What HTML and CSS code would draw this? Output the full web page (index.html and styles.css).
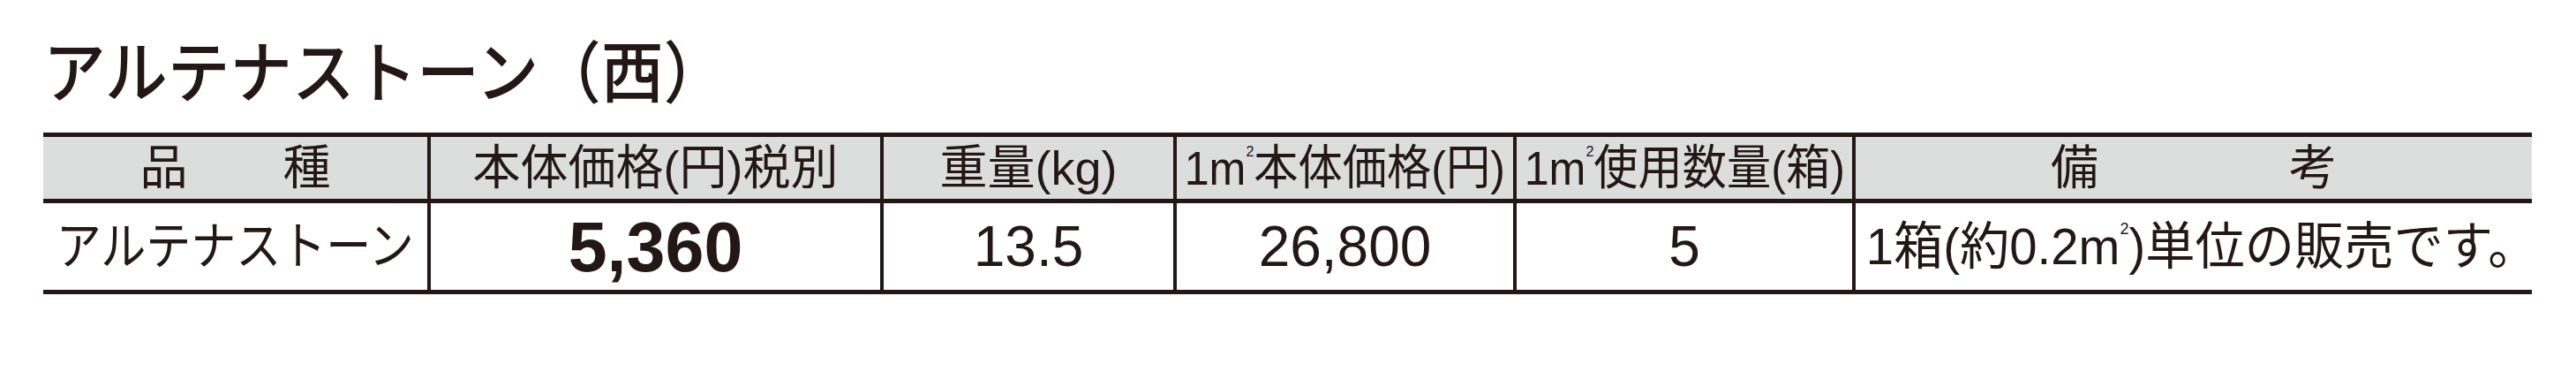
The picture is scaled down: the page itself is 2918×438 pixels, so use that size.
FILE: index.html
```html
<!DOCTYPE html>
<html lang="ja">
<head>
<meta charset="utf-8">
<title>アルテナストーン（西）</title>
<link rel="stylesheet" href="styles.css">
</head>
<body>
<div class="page">
  <h1 class="title"><span class="title-text">アルテナストーン（西）</span></h1>
  <div class="spec">
    <div class="cell head"><span class="ht">品　　種</span></div>
    <div class="cell head"><span class="ht">本体価格(円)税別</span></div>
    <div class="cell head"><span class="ht">重量(kg)</span></div>
    <div class="cell head"><span class="ht narrow">1m<span class="sq">2</span>本体価格(円)</span></div>
    <div class="cell head"><span class="ht narrow">1m<span class="sq">2</span>使用数量(箱)</span></div>
    <div class="cell head"><span class="ht">備　　　　考</span></div>
    <div class="cell"><span class="bt">アルテナストーン</span></div>
    <div class="cell"><span class="price">5,360</span></div>
    <div class="cell"><span class="num">13.5</span></div>
    <div class="cell"><span class="num">26,800</span></div>
    <div class="cell"><span class="num">5</span></div>
    <div class="cell"><span class="bt note">1箱(約0.2m<span class="sq">2</span>)単位の販売です。</span></div>
  </div>
</div>
</body>
</html>
```
FILE: styles.css
```css
html, body {
  margin: 0;
  background: #fff;
}
body {
  font-family: "Liberation Sans", "Noto Sans CJK JP", sans-serif;
  color: #231815;
}
.page {
  padding: 39px 0 0 49px;
}
.title {
  margin: 0;
  font: 500 76px/1 "Noto Sans CJK JP", sans-serif;
}
.title-text {
  display: inline-block;
  transform: scaleX(.93);
  transform-origin: left center;
}
.spec {
  display: grid;
  width: 2819px;
  grid-template-columns: 435px 509px 328px 381px 380px 766px;
  grid-template-rows: 70px 98px;
  column-gap: 4px;
  row-gap: 5px;
  background: #231815;
  border-top: 5px solid #231815;
  border-bottom: 5px solid #231815;
  margin-top: 35px;
}
.cell {
  background: #fff;
  display: flex;
  align-items: center;
  justify-content: center;
  white-space: nowrap;
}
.head {
  background: #dcdddd;
}
.ht {
  display: inline-block;
  font-size: 54px;
  line-height: 1;
}
.narrow {
  transform: scaleX(.93);
}
.bt {
  display: inline-block;
  font-size: 58px;
  line-height: 1;
  transform: scaleX(.88);
}
.note {
  margin-left: 18px;
  transform: scaleX(.97);
}
.price {
  font-weight: 700;
  font-size: 79px;
  line-height: 1;
}
.num {
  font-size: 64px;
  line-height: 1;
}
.sq {
  display: inline-block;
  font-size: .32em;
  vertical-align: top;
  line-height: 1;
}
```
